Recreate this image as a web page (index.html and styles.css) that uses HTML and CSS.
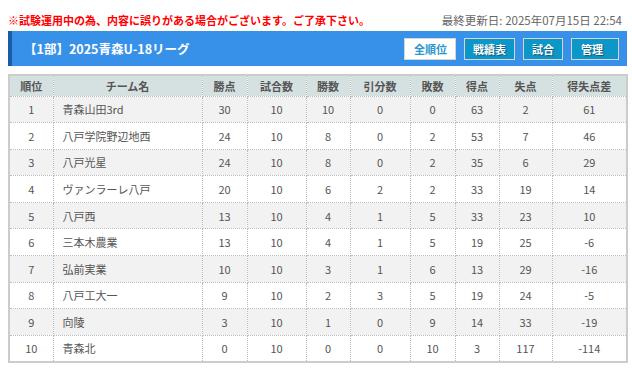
FILE: index.html
```html
<!DOCTYPE html>
<html lang="ja">
<head>
<meta charset="utf-8">
<link rel="stylesheet" href="styles.css">
</head>
<body>
<div class="page">
  <div class="topline">
    <span class="notice">※試験運用中の為、内容に誤りがある場合がございます。ご了承下さい。</span>
    <span class="updated">最終更新日: 2025年07月15日 22:54</span>
  </div>
  <div class="bar">
    <h1 class="title">【1部】2025青森U-18リーグ</h1>
    <nav class="btns">
      <a class="btn btn-active">全順位</a>
      <a class="btn">戦績表</a>
      <a class="btn">試合</a>
      <a class="btn btn-wide">管理</a>
    </nav>
  </div>
  <table class="standings">
    <colgroup>
      <col style="width:44px"><col style="width:149px"><col style="width:45px"><col style="width:59px"><col style="width:44px"><col style="width:60px"><col style="width:45px"><col style="width:44px"><col style="width:53px"><col style="width:75px">
    </colgroup>
    <thead>
      <tr><th>順位</th><th>チーム名</th><th>勝点</th><th>試合数</th><th>勝数</th><th>引分数</th><th>敗数</th><th>得点</th><th>失点</th><th>得失点差</th></tr>
    </thead>
    <tbody>
      <tr><td>1</td><td class="team">青森山田3rd</td><td>30</td><td>10</td><td>10</td><td>0</td><td>0</td><td>63</td><td>2</td><td>61</td></tr>
      <tr><td>2</td><td class="team">八戸学院野辺地西</td><td>24</td><td>10</td><td>8</td><td>0</td><td>2</td><td>53</td><td>7</td><td>46</td></tr>
      <tr><td>3</td><td class="team">八戸光星</td><td>24</td><td>10</td><td>8</td><td>0</td><td>2</td><td>35</td><td>6</td><td>29</td></tr>
      <tr><td>4</td><td class="team">ヴァンラーレ八戸</td><td>20</td><td>10</td><td>6</td><td>2</td><td>2</td><td>33</td><td>19</td><td>14</td></tr>
      <tr><td>5</td><td class="team">八戸西</td><td>13</td><td>10</td><td>4</td><td>1</td><td>5</td><td>33</td><td>23</td><td>10</td></tr>
      <tr><td>6</td><td class="team">三本木農業</td><td>13</td><td>10</td><td>4</td><td>1</td><td>5</td><td>19</td><td>25</td><td>-6</td></tr>
      <tr><td>7</td><td class="team">弘前実業</td><td>10</td><td>10</td><td>3</td><td>1</td><td>6</td><td>13</td><td>29</td><td>-16</td></tr>
      <tr><td>8</td><td class="team">八戸工大一</td><td>9</td><td>10</td><td>2</td><td>3</td><td>5</td><td>19</td><td>24</td><td>-5</td></tr>
      <tr><td>9</td><td class="team">向陵</td><td>3</td><td>10</td><td>1</td><td>0</td><td>9</td><td>14</td><td>33</td><td>-19</td></tr>
      <tr><td>10</td><td class="team">青森北</td><td>0</td><td>10</td><td>0</td><td>0</td><td>10</td><td>3</td><td>117</td><td>-114</td></tr>
    </tbody>
  </table>
</div>
</body>
</html>
```

FILE: styles.css
```css
* { box-sizing: border-box; }
html, body { margin: 0; padding: 0; background: #fff; }
body {
  font-family: "Noto Sans CJK JP", "Noto Sans", sans-serif;
  color: #555;
}
.page { padding: 0 5px 0 8px; }
.topline {
  display: flex;
  justify-content: space-between;
  align-items: center;
  padding-top: 12px;
  height: 31px;
  padding-bottom: 3px;
  line-height: 16px;
}
.notice { color: #ff0000; font-size: 11px; font-weight: bold; }
.updated { color: #666; font-size: 11.5px; padding-right: 5px; }
.bar {
  display: flex;
  align-items: center;
  justify-content: space-between;
  height: 35px;
  background: #3891e9;
  border-left: 4px solid #1b5ca6;
  padding: 0 8px 0 12px;
}
.title {
  margin: 0;
  color: #fff;
  font-size: 12.5px;
  font-weight: bold;
}
.btns { display: flex; gap: 8px; }
.btn {
  display: block;
  height: 22px;
  line-height: 20px;
  padding: 0 8px;
  font-size: 11px;
  font-weight: bold;
  color: #fff;
  background: #0d97c9;
  border: 1px solid #d5d5d5;
  text-shadow: 1px 1px 1px rgba(0,0,0,0.45);
}
.btn-active {
  background: #fff;
  color: #2a96cf;
  text-shadow: none;
  padding: 0 8px 0 9px;
}
.btn-wide { padding: 0 15px 0 9px; }
.standings {
  margin-top: 8px;
  width: 618px;
  table-layout: fixed;
  border-collapse: collapse;
  border: 2px solid #cccccc;
  font-size: 11px;
}
.standings th, .standings td {
  border: 1px dotted #bcbcbc;
  text-align: center;
  padding: 0;
  overflow: hidden;
  white-space: nowrap;
}
.standings th {
  background: #d5e0e0;
  font-weight: bold;
  color: #555;
  height: 21px;
}
.standings td { height: 26.6px; color: #555; }
.standings tbody tr:nth-child(odd) td { background: #f2f2f2; }
.standings td.team { text-align: left; padding-left: 9px; }
```
